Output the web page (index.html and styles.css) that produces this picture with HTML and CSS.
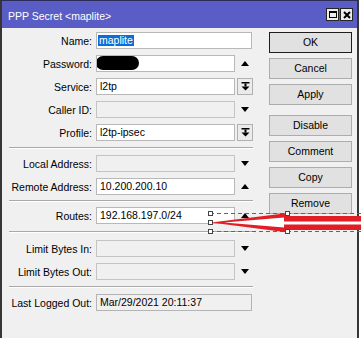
FILE: index.html
```html
<!DOCTYPE html>
<html>
<head>
<meta charset="utf-8">
<title>PPP Secret</title>
<link rel="stylesheet" href="styles.css">
</head>
<body>
<div class="window">
  <div class="titlebar">
    <span class="title">PPP Secret &lt;maplite&gt;</span>
    <div class="tbtns">
      <span class="tbtn"><span class="max-ico"></span></span>
      <span class="tbtn"><svg width="8" height="8" viewBox="0 0 8 8"><path d="M1 1 L7 7 M7 1 L1 7" stroke="#000" stroke-width="2"/></svg></span>
    </div>
  </div>
  <div class="body">
    <div class="form">
      <div class="group">
        <div class="row"><span class="lbl">Name:</span><div class="field full white"><span class="sel">maplite</span></div></div>
        <div class="row"><span class="lbl">Password:</span><div class="field short white"><span class="redact"></span></div><span class="side"><span class="up"></span></span></div>
        <div class="row"><span class="lbl">Service:</span><div class="field short white">l2tp</div><span class="side dd"><svg width="9" height="9" viewBox="0 0 9 9"><rect x="0.5" y="0" width="8" height="1.5"/><rect x="3.5" y="1.5" width="2" height="3"/><path d="M0.5 4.5 H8.5 L4.5 8.5 Z"/></svg></span></div>
        <div class="row"><span class="lbl">Caller ID:</span><div class="field short grey"></div><span class="side"><span class="down"></span></span></div>
        <div class="row"><span class="lbl">Profile:</span><div class="field short white">l2tp-ipsec</div><span class="side dd"><svg width="9" height="9" viewBox="0 0 9 9"><rect x="0.5" y="0" width="8" height="1.5"/><rect x="3.5" y="1.5" width="2" height="3"/><path d="M0.5 4.5 H8.5 L4.5 8.5 Z"/></svg></span></div>
      </div>
      <div class="sep s1"></div>
      <div class="group">
        <div class="row"><span class="lbl">Local Address:</span><div class="field short grey"></div><span class="side"><span class="down"></span></span></div>
        <div class="row"><span class="lbl">Remote Address:</span><div class="field short white">10.200.200.10</div><span class="side"><span class="up"></span></span></div>
      </div>
      <div class="sep s2"></div>
      <div class="group">
        <div class="row"><span class="lbl">Routes:</span><div class="field short white">192.168.197.0/24</div><span class="side"><span class="up"></span></span></div>
      </div>
      <div class="sep s3"></div>
      <div class="group">
        <div class="row"><span class="lbl">Limit Bytes In:</span><div class="field short grey"></div><span class="side"><span class="down"></span></span></div>
        <div class="row"><span class="lbl">Limit Bytes Out:</span><div class="field short grey"></div><span class="side"><span class="down"></span></span></div>
      </div>
      <div class="sep s4"></div>
      <div class="group">
        <div class="row"><span class="lbl">Last Logged Out:</span><div class="field full grey ro">Mar/29/2021 20:11:37</div></div>
      </div>
    </div>
    <div class="buttons">
      <div class="btn default">OK</div>
      <div class="btn">Cancel</div>
      <div class="btn">Apply</div>
      <div class="btn gap">Disable</div>
      <div class="btn">Comment</div>
      <div class="btn">Copy</div>
      <div class="btn">Remove</div>
    </div>
  </div>
</div>
<svg class="annot" width="361" height="338" viewBox="0 0 361 338">
  <path d="M210 213.5 H361 M210 231.5 H361" fill="none" stroke="#2f6fb8" stroke-width="1" stroke-dasharray="4 3"/>
  <path d="M211 222.5 L288 213 L288 216 L361 216 L361 230 L288 230 L288 232.5 Z" fill="#e11d25"/>
  <path d="M224 222.5 L284 217.5 L284 221.5 L361 221.5 L361 224.5 L284 224.5 L284 227.5 Z" fill="#fff"/>
  <g fill="#fff" stroke="#444" stroke-width="1">
    <rect x="208.5" y="211.5" width="4" height="4"/>
    <rect x="208.5" y="220.5" width="4" height="4"/>
    <rect x="208.5" y="229.5" width="4" height="4"/>
    <rect x="285.5" y="211.5" width="4" height="4"/>
    <rect x="285.5" y="229.5" width="4" height="4"/>
  </g>
</svg>
</body>
</html>
```

FILE: styles.css
```css
html, body {
  margin: 0;
  padding: 0;
}
body {
  width: 361px;
  height: 338px;
  overflow: hidden;
  position: relative;
  background: #ffffff;
  font-family: "Liberation Sans", Arial, sans-serif;
  font-size: 10.5px;
  color: #000;
}
.window {
  width: 355px;
  height: 337px;
  border-top: 1px solid #2c2c58;
  border-left: 2px solid #363636;
  border-right: 2px solid #363636;
  background: #f0f0f0;
  display: flex;
  flex-direction: column;
}
.titlebar {
  height: 27px;
  flex: none;
  background: #5a5dc6;
  display: flex;
  align-items: flex-start;
  justify-content: space-between;
  padding: 0 4px 0 6px;
}
.title {
  color: #fff;
  line-height: 12px;
  margin-top: 9px;
}
.tbtns {
  display: flex;
  gap: 1px;
  margin-top: 7px;
}
.tbtn {
  width: 13px;
  height: 13px;
  box-sizing: border-box;
  border: 1px solid #262626;
  background: #ececec;
  display: flex;
  align-items: center;
  justify-content: center;
}
.max-ico {
  width: 8px;
  height: 7px;
  box-sizing: border-box;
  border: 1px solid #000;
  border-top-width: 2px;
}
.body {
  flex: 1;
  display: flex;
  padding-top: 4px;
}
.form {
  width: 251px;
  display: flex;
  flex-direction: column;
}
.group {
  display: flex;
  flex-direction: column;
  gap: 6px;
}
.row {
  display: flex;
  align-items: center;
  height: 17px;
}
.lbl {
  width: 94px;
  box-sizing: border-box;
  padding-right: 4px;
  text-align: right;
  white-space: nowrap;
}
.field {
  height: 17px;
  box-sizing: border-box;
  border: 1px solid #b8b8b8;
  padding-left: 3px;
  line-height: 15px;
  white-space: nowrap;
  overflow: hidden;
  position: relative;
}
.field.full { width: 156px; }
.field.short { width: 139px; }
.field.white { background: #fff; }
.field.grey { background: #f0f0f0; border-color: #c4c4c4; }
.field.ro { border-color: #b4b4b4; }
.sel {
  display: inline-block;
  margin-left: -2px;
  padding: 0 1px;
  height: 11px;
  line-height: 11px;
  background: #0a6ed8;
  color: #fff;
  vertical-align: middle;
  position: relative;
  top: -1px;
}
.redact {
  position: absolute;
  left: -1px;
  top: 0;
  width: 43px;
  height: 14px;
  background: #000;
  border-radius: 7px;
}
.side {
  width: 16px;
  height: 17px;
  margin-left: 2px;
  box-sizing: border-box;
  display: flex;
  align-items: center;
  justify-content: center;
}
.side.dd {
  border: 1px solid #b0b0b0;
  background: #ebebeb;
}
.up {
  width: 0;
  height: 0;
  border-left: 4px solid transparent;
  border-right: 4px solid transparent;
  border-bottom: 5px solid #000;
}
.down {
  width: 0;
  height: 0;
  border-left: 4px solid transparent;
  border-right: 4px solid transparent;
  border-top: 5px solid #000;
}
.sep {
  margin-left: 7px;
  width: 244px;
  height: 2px;
  box-sizing: border-box;
  border-top: 1px solid #a9a9a9;
  border-bottom: 1px solid #ffffff;
}
.s1 { margin-top: 6px; margin-bottom: 6px; }
.s2 { margin-top: 5px; margin-bottom: 5px; }
.s3 { margin-top: 7px; margin-bottom: 7px; }
.s4 { margin-top: 6px; margin-bottom: 6px; }
.buttons {
  margin-left: 16px;
  width: 83px;
  display: flex;
  flex-direction: column;
  gap: 5px;
}
.btn {
  height: 21px;
  box-sizing: border-box;
  border: 1px solid #adadad;
  background: #e1e1e1;
  text-align: center;
  line-height: 19px;
}
.btn.default {
  border-color: #1e1e1e;
}
.btn.gap {
  margin-top: 5px;
}
.annot {
  position: absolute;
  left: 0;
  top: 0;
  pointer-events: none;
}
```
